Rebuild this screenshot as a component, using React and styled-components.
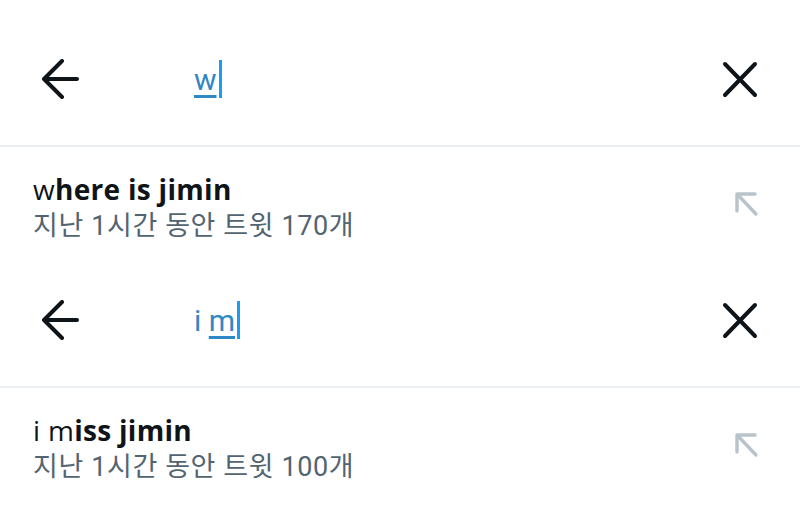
import React from "react";
import styled, { createGlobalStyle } from "styled-components";

const GlobalStyle = createGlobalStyle`
  html, body {
    margin: 0;
    padding: 0;
    background: #ffffff;
  }
  body {
    font-family: Roboto, "Noto Sans CJK KR", sans-serif;
    color: #0f1419;
  }
`;

const Page = styled.div`
  width: 800px;
  height: 526px;
  overflow: hidden;
  background: #ffffff;
`;

const Panel = styled.section`
  height: 241px;
  display: flex;
  flex-direction: column;
`;

const Header = styled.div`
  height: 147px;
  flex-shrink: 0;
  box-sizing: border-box;
  padding: 13px 40px 0 40px;
  display: flex;
  align-items: center;
  border-bottom: 2px solid #eceff1;
`;

const IconButton = styled.button`
  width: 40px;
  height: 40px;
  padding: 0;
  border: none;
  background: none;
  display: flex;
  align-items: center;
  justify-content: center;
  color: #0f1419;
`;

const QueryField = styled.div`
  flex: 1;
  margin-left: 114px;
  display: flex;
  align-items: center;
  font-size: 30px;
  color: #2f87c5;
  height: 40px;
`;

const Composing = styled.span`
  text-decoration: underline;
  text-decoration-thickness: 2.5px;
  text-underline-offset: 5px;
`;

const Caret = styled.span`
  display: inline-block;
  width: 3px;
  height: 38px;
  margin-left: 2px;
  background: #1d9bf0;
`;

const Suggestion = styled.div`
  flex: 1;
  display: flex;
  align-items: flex-start;
  padding: 27px 40px 0 33px;
  min-height: 0;
`;

const SuggestionText = styled.div`
  flex: 1;
  display: flex;
  flex-direction: column;
  gap: 7px;
`;

const Title = styled.div`
  font-family: "Open Sans", "Noto Sans CJK KR", sans-serif;
  font-size: 28px;
  line-height: 30px;
  font-weight: 700;
  letter-spacing: 0.3px;
  color: #0f1419;
`;

const Typed = styled.span`
  font-weight: 400;
`;

const Meta = styled.div`
  font-size: 27px;
  line-height: 30px;
  letter-spacing: 0.6px;
  color: #536471;
`;

const FillButton = styled.div`
  margin-top: 15px;
  display: flex;
`;

const BackIcon = () => (
  <svg width="40" height="40" viewBox="0 0 40 40" fill="none">
    <path
      d="M4 20H37M22 2L4 20L22 38"
      stroke="currentColor"
      strokeWidth="4"
      strokeLinecap="round"
      strokeLinejoin="round"
    />
  </svg>
);

const CloseIcon = () => (
  <svg width="40" height="40" viewBox="0 0 40 40" fill="none">
    <path
      d="M5 5L35 36M35 5L5 36"
      stroke="currentColor"
      strokeWidth="4"
      strokeLinecap="round"
    />
  </svg>
);

const FillIcon = () => (
  <svg width="28" height="28" viewBox="0 0 28 28" fill="none">
    <path
      d="M5 5H23M5 5V22M5 5L24 25"
      stroke="#b9c3ca"
      strokeWidth="3.4"
      strokeLinecap="round"
      strokeLinejoin="miter"
    />
  </svg>
);

const searches = [
  { typed: "", composing: "w", typedTitle: "w", rest: "here is jimin", count: 170 },
  { typed: "i ", composing: "m", typedTitle: "i m", rest: "iss jimin", count: 100 },
];

const SearchPanel = ({ item }) => (
  <Panel>
    <Header>
      <IconButton aria-label="뒤로">
        <BackIcon />
      </IconButton>
      <QueryField>
        {item.typed && <span style={{ whiteSpace: "pre" }}>{item.typed}</span>}
        <Composing>{item.composing}</Composing>
        <Caret />
      </QueryField>
      <IconButton aria-label="지우기">
        <CloseIcon />
      </IconButton>
    </Header>
    <Suggestion>
      <SuggestionText>
        <Title>
          <Typed>{item.typedTitle}</Typed>
          {item.rest}
        </Title>
        <Meta>지난 1시간 동안 트윗 {item.count}개</Meta>
      </SuggestionText>
      <FillButton>
        <FillIcon />
      </FillButton>
    </Suggestion>
  </Panel>
);

export default function App() {
  return (
    <Page>
      <GlobalStyle />
      {searches.map((item) => (
        <SearchPanel key={item.count} item={item} />
      ))}
    </Page>
  );
}
